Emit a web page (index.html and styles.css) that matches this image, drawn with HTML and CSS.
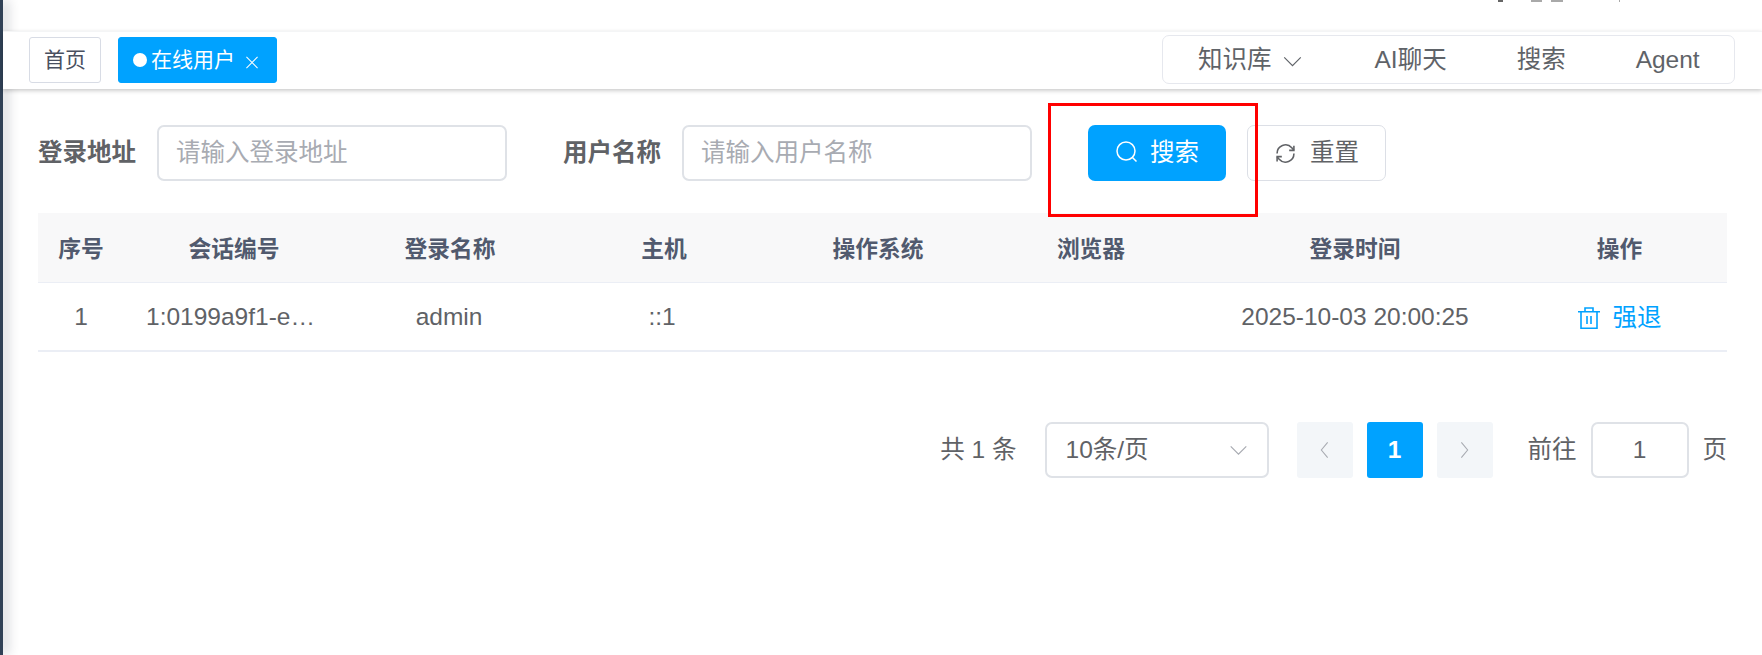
FILE: index.html
```html
<!DOCTYPE html>
<html lang="zh-CN">
  <head>
    <meta charset="UTF-8" />
    <meta name="viewport" content="width=device-width, initial-scale=1.0" />
    <title>在线用户</title>
    <link rel="stylesheet" href="styles.css">
  </head>
  <body>
    <div class="app">
      <div class="sidebar"></div>
      <div class="main">
        <div class="navbar">
          <span class="clip clip-a"></span>
          <span class="clip clip-b"></span>
          <span class="clip clip-c"></span>
          <span class="clip clip-d"></span>
        </div>
        <div class="tagbar">
          <div class="tags">
            <span class="tag">首页</span>
            <span class="tag tag-active"><i class="dot"></i>在线用户
              <svg class="tag-close" viewBox="0 0 14 14"><path d="M1 1l12 12M13 1L1 13" /></svg>
            </span>
          </div>
          <div class="topmenu">
            <span class="menu-item menu-first">知识库
              <svg class="menu-arrow" viewBox="0 0 20 12"><path d="M1 1.5l9 9 9-9" /></svg>
            </span>
            <span class="menu-item menu-ai">AI聊天</span>
            <span class="menu-item menu-search">搜索</span>
            <span class="menu-item menu-agent">Agent</span>
          </div>
        </div>

        <div class="content">
          <form class="filter">
            <label class="filter-label">登录地址</label>
            <div class="input filter-input">请输入登录地址</div>
            <label class="filter-label filter-label-second">用户名称</label>
            <div class="input filter-input">请输入用户名称</div>
            <div class="highlight-wrap">
              <span class="btn btn-primary">
                <svg class="btn-icon icon-search" viewBox="0 0 21 21"><circle cx="10" cy="10" r="9" /><path d="M16.5 16.5l4 4" /></svg>搜索
              </span>
              <span class="highlight"></span>
            </div>
            <span class="btn btn-default">
              <svg class="btn-icon icon-refresh" viewBox="0 0 18 20"><path d="M1 10a8 8 0 0 1 14-5.5L17 7M17 10a8 8 0 0 1-14 5.5L1 13" /><path d="M17 2.5V7h-4.5M1 17.5V13h4.5" /></svg>重置
            </span>
          </form>

          <table class="grid">
            <colgroup>
              <col class="col-index" />
              <col class="col-session" />
              <col class="col-login" />
              <col class="col-host" />
              <col class="col-os" />
              <col class="col-browser" />
              <col class="col-time" />
              <col />
            </colgroup>
            <thead>
              <tr>
                <th>序号</th>
                <th>会话编号</th>
                <th>登录名称</th>
                <th>主机</th>
                <th>操作系统</th>
                <th>浏览器</th>
                <th>登录时间</th>
                <th>操作</th>
              </tr>
            </thead>
            <tbody>
              <tr>
                <td>1</td>
                <td class="cell-session">1:0199a9f1-e…</td>
                <td class="cell-login">admin</td>
                <td class="cell-host">::1</td>
                <td></td>
                <td></td>
                <td>2025-10-03 20:00:25</td>
                <td>
                  <span class="link">
                    <svg class="link-icon" viewBox="0 0 22 22"><path d="M0 4.8h22M7 4.8V1h8v3.8M3 4.8v16.4h16V4.8M9 9v8M13 9v8" /></svg>强退
                  </span>
                </td>
              </tr>
            </tbody>
          </table>

          <div class="pager">
            <span class="pager-total">共 1 条</span>
            <div class="input pager-size">10条/页
              <svg class="pager-arrow" viewBox="0 0 20 12"><path d="M1.5 1.5l8.5 8.5 8.5-8.5" /></svg>
            </div>
            <span class="page-btn">
              <svg class="page-icon" viewBox="0 0 10 20"><path d="M8.5 1.5L1.5 10l7 8.5" /></svg>
            </span>
            <span class="page-btn page-current">1</span>
            <span class="page-btn">
              <svg class="page-icon" viewBox="0 0 10 20"><path d="M1.5 1.5l7 8.5-7 8.5" /></svg>
            </span>
            <span class="pager-goto">前往</span>
            <div class="input pager-jump">1</div>
            <span class="pager-unit">页</span>
          </div>
        </div>
      </div>
    </div>
  </body>
</html>
```

FILE: styles.css
```css
* {
  box-sizing: border-box;
}
html,
body {
  margin: 0;
  height: 100%;
  overflow: hidden;
}
body {
  font-family: "Liberation Sans", "Noto Sans CJK SC", sans-serif;
  font-size: 24.5px;
  line-height: 1.4;
  color: #606266;
  background: #fff;
}
svg {
  fill: none;
  stroke: currentColor;
}
.app {
  display: flex;
  height: 100%;
}
.sidebar {
  width: 3px;
  flex: none;
  background: #304156;
  box-shadow: 3px 0 12px rgba(0, 21, 41, 0.45);
}
.main {
  flex: 1;
  min-width: 0;
}
.navbar {
  height: 31px;
  display: flex;
  align-items: flex-start;
  padding-left: 1495px;
}
.clip {
  height: 2px;
  background: #a9a9a9;
}
.clip-a {
  width: 5px;
  background: #666;
}
.clip-b {
  width: 11px;
  margin-left: 28px;
}
.clip-c {
  width: 12px;
  margin-left: 9px;
}
.clip-d {
  width: 1px;
  margin-left: 56px;
}
.tagbar {
  position: relative;
  height: 58px;
  display: flex;
  align-items: flex-start;
  justify-content: space-between;
  padding: 3px 27px 0 26px;
  border-top: 1px solid #f4f5f6;
  background: #fff;
  box-shadow: 0 2px 4px rgba(0, 0, 0, 0.18), 0 0 5px rgba(0, 0, 0, 0.04);
}
.tags {
  display: flex;
  gap: 17px;
  padding-top: 2px;
}
.tag {
  height: 46px;
  display: flex;
  align-items: center;
  padding: 0 14px;
  font-size: 21px;
  color: #495060;
  border: 1px solid #d8dce5;
  border-radius: 3px;
}
.tag-active {
  padding-right: 17px;
  color: #fff;
  background: #00a2ff;
  border-color: #00a2ff;
}
.dot {
  width: 14px;
  height: 14px;
  margin-right: 4px;
  border-radius: 50%;
  background: #fff;
}
.tag-close {
  width: 14px;
  height: 13px;
  margin: 5px 0 0 10px;
  stroke-width: 1.1;
}
.topmenu {
  width: 573px;
  height: 49px;
  display: flex;
  align-items: center;
  padding-top: 2px;
  border: 1px solid #e6e8ee;
  border-radius: 7px;
  color: #5f6368;
}
.menu-item {
  display: flex;
  align-items: center;
}
.menu-first {
  margin-left: 35px;
}
.menu-arrow {
  width: 19px;
  height: 11px;
  margin: 2px 0 0 11px;
  stroke-width: 1.3;
}
.menu-ai {
  margin-left: 73px;
}
.menu-search {
  margin-left: 70px;
}
.menu-agent {
  margin-left: 70px;
}
.content {
  padding: 36px 35px 0;
}
.filter {
  display: flex;
  align-items: center;
  height: 56px;
}
.filter-label {
  font-weight: 700;
  margin-right: 21px;
  width: 98px;
  white-space: nowrap;
}
.filter-label-second {
  margin-left: 56px;
}
.input {
  height: 56px;
  display: flex;
  align-items: center;
  border: 2px solid #dfe2e7;
  border-radius: 7px;
}
.filter-input {
  width: 350px;
  padding: 0 17px;
  color: #a8abb2;
}
.highlight-wrap {
  position: relative;
  margin-left: 56px;
}
.highlight {
  position: absolute;
  left: -40px;
  top: -22px;
  width: 210px;
  height: 114px;
  border: 3px solid #f00;
}
.btn {
  height: 56px;
  display: flex;
  align-items: center;
  justify-content: center;
  width: 138px;
  border-radius: 7px;
}
.btn-primary {
  padding-left: 1px;
  color: #fff;
  background: #00a2ff;
}
.btn-default {
  width: 139px;
  margin-left: 21px;
  padding-left: 2px;
  border: 1px solid #dcdfe6;
}
.btn-icon {
  stroke-width: 1.5;
}
.icon-search {
  width: 21px;
  height: 21px;
  margin: -3px 13px 0 0;
}
.icon-refresh {
  width: 19px;
  height: 21px;
  margin-right: 15px;
}
.grid {
  width: 1689px;
  margin-top: 32px;
  border-collapse: collapse;
  table-layout: fixed;
}
.col-index {
  width: 86px;
}
.col-session {
  width: 220px;
}
.col-login {
  width: 212px;
}
.col-host {
  width: 216px;
}
.col-os {
  width: 212px;
}
.col-browser {
  width: 214px;
}
.col-time {
  width: 314px;
}
.grid th {
  height: 69px;
  padding: 0;
  font-size: 22.75px;
  font-weight: 700;
  line-height: normal;
  color: #515a6e;
  background: #f8f8f9;
  border-bottom: 1px solid #ebeef5;
}
.grid td {
  height: 69px;
  padding: 2px 0 0;
  text-align: center;
  border-bottom: 2px solid #ebeef5;
}
.grid .cell-session {
  padding-right: 7px;
}
.grid .cell-login {
  padding-right: 2px;
}
.grid .cell-host {
  padding-right: 4px;
}
.link {
  display: inline-flex;
  align-items: center;
  vertical-align: middle;
  color: #00a2ff;
}
.link-icon {
  width: 22px;
  height: 22px;
  margin: 0 13px 0 0;
  stroke-width: 1.6;
}
.pager {
  display: flex;
  align-items: center;
  justify-content: flex-end;
  height: 56px;
  width: 1689px;
  margin-top: 70px;
}
.pager-total {
  margin-right: 28px;
}
.pager-size {
  width: 224px;
  padding: 0 19px;
  justify-content: space-between;
  margin-right: 28px;
}
.pager-arrow {
  width: 19px;
  height: 11px;
  color: #a8abb2;
  stroke-width: 1.3;
}
.page-btn {
  width: 56px;
  height: 56px;
  display: flex;
  align-items: center;
  justify-content: center;
  margin-right: 14px;
  border-radius: 3px;
  color: #a8abb2;
  background: #f3f6f9;
}
.page-current {
  color: #fff;
  font-weight: 700;
  background: #00a2ff;
}
.page-icon {
  width: 11px;
  height: 18px;
  stroke-width: 1.2;
}
.pager-goto {
  margin-left: 21px;
  margin-right: 14px;
}
.pager-jump {
  width: 98px;
  justify-content: center;
  margin-right: 14px;
}
```
